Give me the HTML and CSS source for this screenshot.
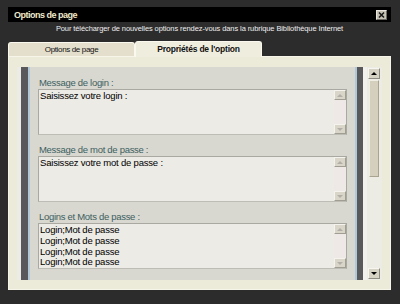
FILE: index.html
```html
<!DOCTYPE html>
<html>
<head>
    <meta charset="UTF-8">
    <title>Options de page</title>
    <link rel="stylesheet" href="styles.css">
</head>
<body>
    <div class="window">
        <div class="titlebar">
            <span class="title">Options de page</span>
            <span class="close">
                <svg width="9" height="8" viewBox="0 0 9 8"><path d="M2 1.5l5 5M7 1.5l-5 5" stroke="#1a1a1a" stroke-width="1.6" fill="none"/></svg>
            </span>
        </div>
        <p class="hint">Pour télécharger de nouvelles options rendez-vous dans la rubrique Bibliothèque Internet</p>

        <div class="tabs">
            <div class="tab">Options de page</div>
            <div class="tab active">Propriétés de l'option</div>
        </div>

        <div class="panel">
            <div class="frame">
                <div class="edge-left"></div>

                <div class="fields">
                    <div class="label">Message de login :</div>
                    <div class="box">
                        <div class="box-text">Saisissez votre login :</div>
                        <div class="mini-scroll"><span class="mini-btn up"></span><span class="mini-btn down"></span></div>
                    </div>

                    <div class="label">Message de mot de passe :</div>
                    <div class="box">
                        <div class="box-text">Saisissez votre mot de passe :</div>
                        <div class="mini-scroll"><span class="mini-btn up"></span><span class="mini-btn down"></span></div>
                    </div>

                    <div class="label">Logins et Mots de passe :</div>
                    <div class="box">
                        <div class="box-text">Login;Mot de passe<br>Login;Mot de passe<br>Login;Mot de passe<br>Login;Mot de passe</div>
                        <div class="mini-scroll"><span class="mini-btn up"></span><span class="mini-btn down"></span></div>
                    </div>
                </div>

                <div class="edge-right"></div>

                <div class="scrollbar">
                    <span class="sb-btn up"></span>
                    <span class="sb-thumb"></span>
                    <span class="sb-btn down"></span>
                </div>
            </div>
        </div>
    </div>
</body>
</html>
```

FILE: styles.css
```css
/* base */
body{
    margin: 0;
    background: #2c2c2c;
    font-family: "Liberation Sans", Arial, sans-serif;
}

.window{
    width: 383px;
    margin-left: 8px;
    padding-top: 7px;
}

/* title bar */
.titlebar{
    height: 15px;
    background: #000;
    display: flex;
    align-items: center;
    justify-content: space-between;
    padding: 0 4px 0 6px;
    box-sizing: border-box;
}
.title{
    color: #efeacb;
    font-weight: bold;
    font-size: 9px;
    letter-spacing: -0.5px;
}
.close{
    width: 11px;
    height: 10px;
    box-sizing: border-box;
    background: #c6c2b6;
    border: 1px solid;
    border-color: #e8e6de #6c6a64 #6c6a64 #e8e6de;
    display: flex;
    align-items: center;
    justify-content: center;
}

.hint{
    margin: 0;
    height: 14px;
    line-height: 14px;
    text-align: center;
    font-size: 7.5px;
    letter-spacing: -0.1px;
    color: #eeeeee;
}

/* tabs */
.tabs{
    display: flex;
    align-items: flex-end;
    height: 15px;
    margin-top: 5px;
}
.tab{
    width: 127px;
    height: 14px;
    box-sizing: border-box;
    border: 1px solid #fbf9ef;
    border-bottom: none;
    border-radius: 3px 3px 0 0;
    background: #e3dfcc;
    color: #111;
    font-size: 8px;
    letter-spacing: -0.35px;
    line-height: 13px;
    text-align: center;
}
.tab.active{
    height: 16px;
    margin-bottom: -1px;
    line-height: 15px;
    background: #efedde;
    font-size: 8.5px;
    letter-spacing: -0.2px;
    font-weight: bold;
    position: relative;
    z-index: 1;
}

/* panel */
.panel{
    background: #ecead9;
    border: 1px solid #f7f5ea;
    padding: 10px 8px 9px 8px;
}
.frame{
    display: flex;
    height: 213px;
}
.edge-left{
    width: 7px;
    background: #59595b;
    border-left: 4px solid #ecebe5;
    border-right: 2px solid #b0c8d8;
}
.edge-right{
    width: 6px;
    background: #59595b;
    border-left: 2px solid #b0c8d8;
}

.fields{
    flex: 1;
    background: #d8d7d0;
    padding: 10px 8px 0 8px;
}
.label{
    font-size: 9.5px;
    letter-spacing: -0.3px;
    line-height: 12px;
    color: #3d5f5f;
    padding-left: 1px;
}
.box + .label{
    margin-top: 9px;
}
.box{
    display: flex;
    height: 46px;
    box-sizing: border-box;
    background: #ecebe5;
    border: 1px solid #a9a9a1;
    border-bottom-color: #bdbdb5;
}
.box-text{
    flex: 1;
    padding: 1px;
    font-size: 9.5px;
    letter-spacing: -0.2px;
    line-height: 10.8px;
    color: #000;
}

/* small scroller inside the boxes */
.mini-scroll{
    width: 12px;
    display: flex;
    flex-direction: column;
    justify-content: space-between;
    background: #eee9e6;
}
.mini-btn{
    height: 10px;
    box-sizing: border-box;
    background: #d9d5c8;
    border: 1px solid;
    border-color: #f4f3ee #a09d92 #a09d92 #f4f3ee;
    display: flex;
    align-items: center;
    justify-content: center;
}
.mini-btn::after{
    content: "";
    border-left: 3px solid transparent;
    border-right: 3px solid transparent;
}
.mini-btn.up::after{
    border-bottom: 3px solid #b2afa8;
}
.mini-btn.down::after{
    border-top: 3px solid #b2afa8;
}

/* main scrollbar */
.scrollbar{
    width: 19px;
    box-sizing: border-box;
    border-left: 4px solid #f2f1ec;
    background: #ecebe4;
    padding: 1px 2px 1px 1px;
    display: flex;
    flex-direction: column;
}
.sb-btn{
    height: 11px;
    box-sizing: border-box;
    background: #d6d2c4;
    border: 1px solid;
    border-color: #f6f5ef #8e8b80 #8e8b80 #f6f5ef;
    display: flex;
    align-items: center;
    justify-content: center;
}
.sb-btn::after{
    content: "";
    border-left: 3px solid transparent;
    border-right: 3px solid transparent;
}
.sb-btn.up::after{
    border-bottom: 3px solid #000;
}
.sb-btn.down{
    margin-top: auto;
}
.sb-btn.down::after{
    border-top: 3px solid #000;
}
.sb-thumb{
    height: 97px;
    width: 10px;
    margin: 1px 0 0 1px;
    box-sizing: border-box;
    background: #d4d0bd;
    border: 1px solid;
    border-color: #f0eee4 #a8a490 #a8a490 #f0eee4;
}
```
